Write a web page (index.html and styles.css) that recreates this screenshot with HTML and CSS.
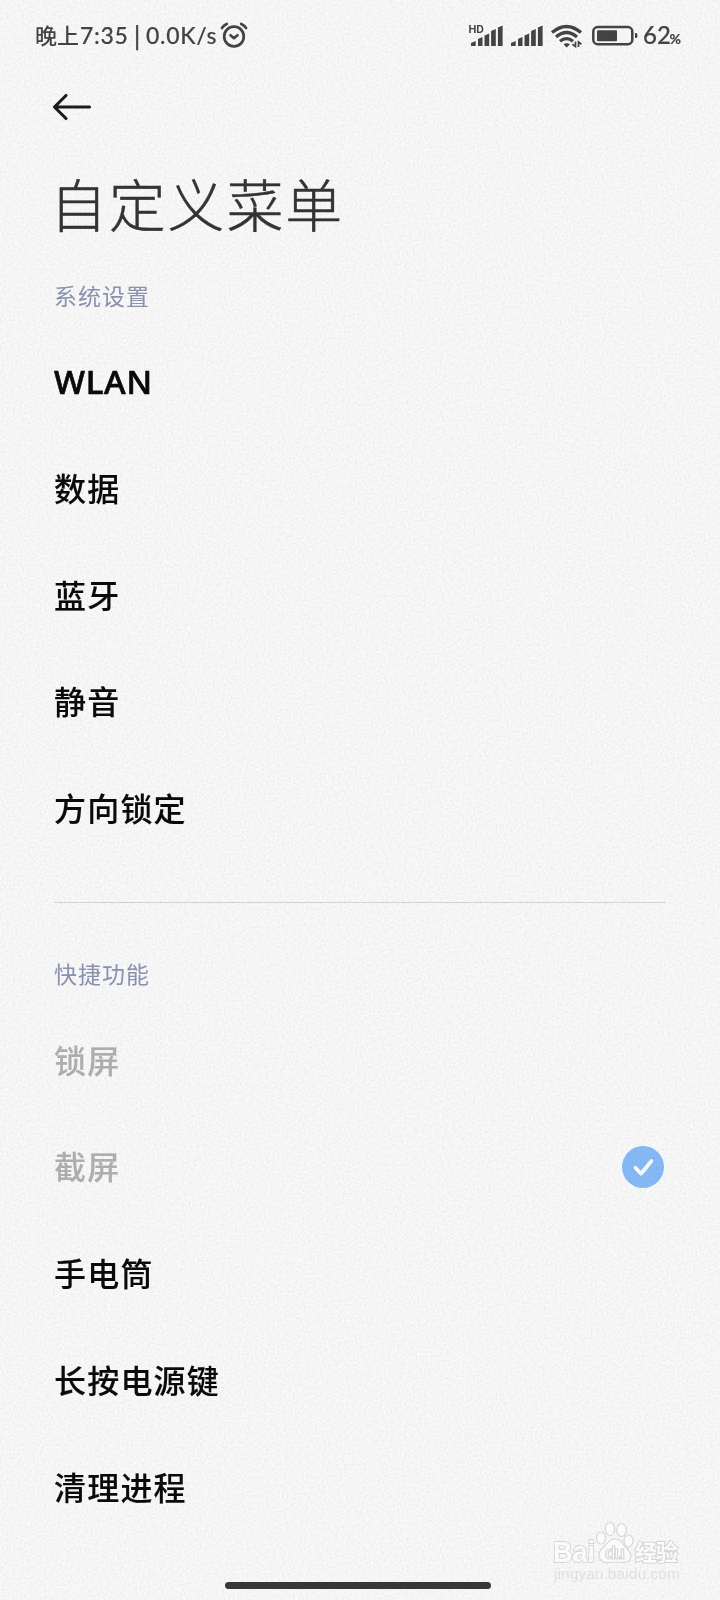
FILE: index.html
```html
<!DOCTYPE html>
<html lang="zh-CN">
<head>
<meta charset="utf-8">
<title>自定义菜单</title>
<link rel="stylesheet" href="styles.css">
</head>
<body>
<div class="screen">
  <header class="status">
    <span class="time">晚上<span class="digits">7:35</span></span>
    <span class="bar">|</span>
    <span class="speed">0.0K/s</span>
    <svg class="alarm" width="28" height="26" viewBox="0 0 28 26" fill="none" stroke="#444" stroke-width="2.7" stroke-linecap="round" stroke-linejoin="round">
      <circle cx="14" cy="14.500" r="9.800"/>
      <path d="M10.500 13.300l3.500 2.900 3.500-2.900M1.900 6Q3.800 3.200 6.800 2M26.100 6Q24.200 3.200 21.200 2"/>
    </svg>
    <svg class="signals" width="214" height="28" viewBox="468 20 214 28" fill="#444">
      <text class="hd" x="468.500" y="32">HD</text>
      <path id="bars" d="M471 45v-3l4.700-2v5zM478 45v-7l4.500-2v9zM484.500 45V34.500l4.700-2V45zM491.100 45V30l4.700-2V45zM497.900 45V26.500l4.700-2V45z"/>
      <use href="#bars" x="40"/>
      <g fill="none" stroke="#444" stroke-width="3.300">
        <path d="M552 31.500Q566.500 19.500 581 31.500"/>
        <path d="M556 36Q566.500 27 577 36"/>
        <path d="M560 40.300Q566.500 35 573 40.300"/>
      </g>
      <path d="M563.500 43.300q3-2.300 6.500 0L566.800 46.500z"/>
      <path d="M575.500 40.500v5l-3-2.200M578.500 46v-5l3 2.200" fill="none" stroke="#444" stroke-width="1.700"/>
      <rect x="593.300" y="26" width="39" height="17.300" rx="4.500" fill="none" stroke="#444" stroke-width="2.500"/>
      <rect x="597" y="29.300" width="20" height="10.900" rx="1"/>
      <path d="M635 32h1.500q1 1 1 2.500t-1 2.500H635z"/>
      <text class="level" x="643" y="43">62</text>
      <text class="percent" x="669.500" y="43">%</text>
    </svg>
  </header>
  <nav class="toolbar">
    <svg width="42" height="32" viewBox="0 0 42 32" fill="none" stroke="#1c1c1c" stroke-width="3.100" stroke-linecap="round" stroke-linejoin="round">
      <path d="M37.500 16H3M14 4.500L2.500 16 14 27.500"/>
    </svg>
  </nav>
  <h1 class="title">自定义菜单</h1>
  <section class="group">
    <h2 class="label">系统设置</h2>
    <div class="row latin">WLAN</div>
    <div class="row">数据</div>
    <div class="row">蓝牙</div>
    <div class="row">静音</div>
    <div class="row">方向锁定</div>
  </section>
  <hr class="divider">
  <section class="group">
    <h2 class="label">快捷功能</h2>
    <div class="row disabled">锁屏</div>
    <div class="row disabled">截屏
      <svg class="check" width="42" height="42" viewBox="0 0 42 42"><circle cx="21" cy="21" r="21" fill="#86bbf7"/><path d="M13.500 21.700l5.500 6L29.500 15" fill="none" stroke="#fafcff" stroke-width="3.700" stroke-linecap="round" stroke-linejoin="round"/></svg>
    </div>
    <div class="row">手电筒</div>
    <div class="row">长按电源键</div>
    <div class="row">清理进程</div>
  </section>
  <svg class="watermark" width="136" height="64" viewBox="550 1520 136 64">
    <g fill="#fff" stroke="#dadada" stroke-width="1.200">
      <text class="brand" x="553" y="1562" textLength="42" lengthAdjust="spacingAndGlyphs">Bai</text>
      <ellipse cx="601" cy="1538" rx="4.500" ry="6"/>
      <ellipse cx="610" cy="1529" rx="4.700" ry="6.500"/>
      <ellipse cx="621.500" cy="1530" rx="4.700" ry="6.500"/>
      <ellipse cx="628.500" cy="1541" rx="4.500" ry="6"/>
      <path d="M615 1539c-6 0-8 5-11 8-4 3-6 6-5 10s5 6 9 5.500q7-1 14 0c5 .5 9-2 9-6s-3-7-6-10-4-7.500-10-7.500z"/>
      <text class="du" x="605" y="1559" textLength="20">du</text>
      <text class="jingyan" x="635" y="1560" textLength="43">经验</text>
    </g>
    <text class="site" x="554" y="1579" textLength="126" lengthAdjust="spacingAndGlyphs">jingyan.baidu.com</text>
  </svg>
  <div class="home"></div>
</div>
<svg class="grain" width="720" height="1600">
  <filter id="noise" x="0" y="0" width="100%" height="100%" color-interpolation-filters="sRGB">
    <feTurbulence type="fractalNoise" baseFrequency="0.45" numOctaves="2" seed="4"/>
    <feColorMatrix values="1.5 0 0 0 0  1.5 0 0 0 0  1.5 0 0 0 0  0 0 0 0 1"/>
  </filter>
  <rect width="720" height="1600" filter="url(#noise)"/>
</svg>
</body>
</html>
```
FILE: styles.css
```css
* { box-sizing: border-box; }
body {
  margin: 0;
  background: #f9f9f9;
  font-family: "Noto Sans CJK SC", sans-serif;
  color: #0a0a0a;
}
.screen {
  position: relative;
  width: 720px;
  height: 1600px;
  overflow: hidden;
}
.status {
  display: flex;
  align-items: center;
  height: 70px;
  padding: 0 38px 0 35px;
  color: #444;
  font-size: 22px;
  font-weight: 500;
  white-space: nowrap;
}
.time, .bar, .speed { margin-top: -2px; }
.time { width: 99px; }
.digits, .speed {
  font-family: Lato, sans-serif;
  font-size: 23px;
  letter-spacing: 0.7px;
  -webkit-text-stroke: 0.15px #444;
}
.digits { margin-left: 1px; }
.bar { width: 12px; -webkit-text-stroke: 0.5px #444; }
.speed { width: 74px; margin-top: 0; }
.alarm { flex: none; }
.signals { margin-left: auto; }
.hd { font: 700 10.5px Inter, sans-serif; }
.level { font: 500 24px Lato, sans-serif; stroke: #444; stroke-width: 0.15px; }
.percent { font: 700 14px Lato, sans-serif; stroke: #444; stroke-width: 0.2px; }
.toolbar {
  height: 74px;
  padding: 21px 0 0 52px;
}
.title {
  height: 124px;
  margin: 0;
  padding-left: 50px;
  font-size: 57px;
  line-height: 116px;
  font-weight: 300;
  letter-spacing: 1.8px;
  color: #333;
  -webkit-text-stroke: 0.4px #333;
}
.label {
  height: 59px;
  margin: 0;
  padding-left: 54px;
  font-size: 23px;
  line-height: 55px;
  font-weight: 400;
  letter-spacing: 1px;
  color: #8c93b2;
}
.row {
  display: flex;
  align-items: center;
  justify-content: space-between;
  height: 106.7px;
  padding: 0 56px 0 54px;
  font-size: 32px;
  font-weight: 500;
  letter-spacing: 1.2px;
  -webkit-text-stroke: 0.1px currentColor;
}
.latin {
  padding-top: 2px;
  font-family: "Noto Sans", sans-serif;
  font-size: 33px;
  font-weight: 500;
  letter-spacing: 0.7px;
  -webkit-text-stroke: 0.7px currentColor;
}
.disabled { color: #b0b0b0; }
.check { margin-top: 3px; }
.divider {
  height: 1px;
  margin: 42px 54px 43px;
  border: 0;
  background: #d6d6d6;
}
.watermark { position: absolute; left: 550px; top: 1520px; }
.brand, .jingyan { paint-order: stroke; stroke-width: 2px; }
.brand { font: 700 29px "Liberation Sans", sans-serif; }
.du { font: 700 18px "Liberation Sans", sans-serif; }
.jingyan { font: 700 22px "Noto Sans CJK SC", sans-serif; }
.site { font: 15px "Liberation Sans", sans-serif; fill: #e4e4e4; }
.home {
  position: absolute;
  left: 225px;
  top: 1582px;
  width: 266px;
  height: 7px;
  border-radius: 4px;
  background: #383838;
}
.grain {
  position: absolute;
  left: 0;
  top: 0;
  opacity: 0.065;
  mix-blend-mode: multiply;
  pointer-events: none;
}
```
